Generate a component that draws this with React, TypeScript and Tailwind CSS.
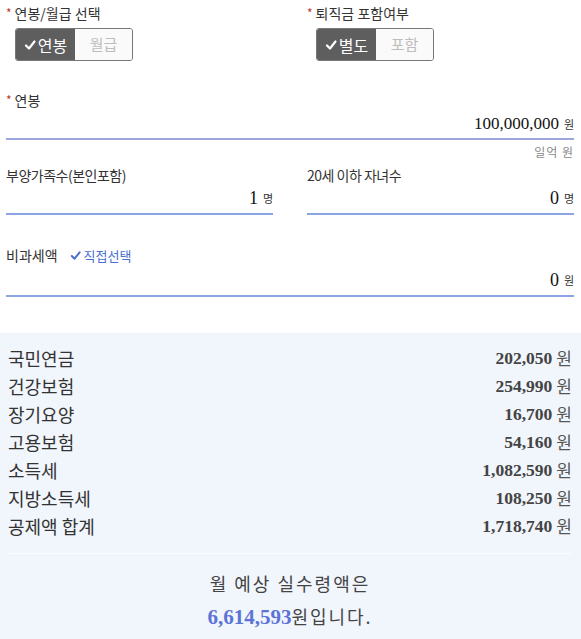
import React from "react";

const Check = ({ className = "" }: { className?: string }) => (
  <svg viewBox="0 0 12 12" className={className} fill="none" stroke="currentColor" strokeWidth={2.2} strokeLinecap="round" strokeLinejoin="round">
    <polyline points="2,6.5 5,9.5 10.5,2.5" />
  </svg>
);

const Star = () => <span className="text-[#c0392b] text-[12px] mr-[3px] relative top-[-1px]">*</span>;

function Toggle({ on, off }: { on: string; off: string }) {
  return (
    <div className="ml-[9px] mt-[6px] flex h-[33px] w-[118px] rounded-[3px] border border-[#777] overflow-hidden">
      <div className="flex w-[59px] items-center justify-center gap-[2px] bg-[#5e5e5e] text-white text-[16px]">
        <Check className="w-[12px] h-[12px]" />
        <span>{on}</span>
      </div>
      <div className="flex flex-1 items-center justify-center bg-[#fafafa] text-[#bdbdbd] text-[15px]">{off}</div>
    </div>
  );
}

const rows: [string, string][] = [
  ["국민연금", "202,050"],
  ["건강보험", "254,990"],
  ["장기요양", "16,700"],
  ["고용보험", "54,160"],
  ["소득세", "1,082,590"],
  ["지방소득세", "108,250"],
  ["공제액 합계", "1,718,740"],
];

export default function App() {
  return (
    <div className="w-[581px] min-h-[639px] bg-white text-[#333] font-['Noto_Sans_CJK_KR','Noto_Sans',sans-serif]">
      <div className="pl-[6px] pr-[7px]">
        <div className="grid grid-cols-2 gap-x-[34px] pt-[5px]">
          <div>
            <div className="text-[14px] leading-[17px] text-[#333]"><Star />연봉/월급 선택</div>
            <Toggle on="연봉" off="월급" />
          </div>
          <div>
            <div className="text-[14px] leading-[17px] text-[#333]"><Star />퇴직금 포함여부</div>
            <Toggle on="별도" off="포함" />
          </div>
        </div>

        <div className="mt-[31px] text-[14px] leading-[17px]"><Star />연봉</div>
        <div className="pt-[5px] pb-[4px] flex items-center justify-end border-b-2 border-[#9ca6da]">
          <span className="font-['Liberation_Serif',serif] text-[17px] leading-[20px] text-[#111]">100,000,000</span>
          <span className="ml-[5px] text-[11px] leading-[20px] w-[10px] text-[#333]">원</span>
        </div>
        <div className="mt-[5px] text-right text-[12px] leading-[14px] text-[#8a8a8a] tracking-[1px]">일억 원</div>

        <div className="grid grid-cols-2 gap-x-[34px] mt-[8px]">
          <div>
            <div className="text-[14px] leading-[17px] tracking-[-0.5px]">부양가족수(본인포함)</div>
            <div className="pt-[4px] pb-[5px] flex items-center justify-end border-b-2 border-[#8ba5e2]">
              <span className="font-['Liberation_Serif',serif] text-[18px] leading-[20px] text-[#111]">1</span>
              <span className="ml-[5px] text-[11px] leading-[20px] w-[10px]">명</span>
            </div>
          </div>
          <div>
            <div className="text-[14px] leading-[17px] tracking-[-0.5px]">20세 이하 자녀수</div>
            <div className="pt-[4px] pb-[5px] flex items-center justify-end border-b-2 border-[#8ba5e2]">
              <span className="font-['Liberation_Serif',serif] text-[18px] leading-[20px] text-[#111]">0</span>
              <span className="ml-[5px] text-[11px] leading-[20px] w-[10px]">명</span>
            </div>
          </div>
        </div>

        <div className="mt-[32px] flex items-center text-[14px] leading-[17px]">
          <span>비과세액</span>
          <span className="ml-[12px] flex items-center text-[#4a6fd0] text-[13px]">
            <Check className="w-[11px] h-[11px] mr-[3px]" />직접선택
          </span>
        </div>
        <div className="pt-[6px] pb-[5px] flex items-center justify-end border-b-2 border-[#8ba5e2]">
          <span className="font-['Liberation_Serif',serif] text-[18px] leading-[20px] text-[#111]">0</span>
          <span className="ml-[5px] text-[11px] leading-[20px] w-[10px]">원</span>
        </div>
      </div>

      <div className="mt-[36px] bg-[#f1f5fc] pl-[8px] pr-[9px] pt-[11px] pb-[10px]">
        {rows.map(([k, v]) => (
          <div key={k} className="flex h-[28px] items-center justify-between">
            <span className="text-[18px] text-[#333]">{k}</span>
            <span className="flex items-center">
              <span className="font-['Liberation_Serif',serif] font-bold text-[17.5px] text-[#444]">{v}</span>
              <span className="ml-[4px] text-[17px] text-[#555]">원</span>
            </span>
          </div>
        ))}
        <div className="mt-[13px] border-t border-[#fbfcff]" />
        <div className="mt-[17px] text-center text-[18px] leading-[24px] tracking-[2px] text-[#444]">월 예상 실수령액은</div>
        <div className="mt-[7px] text-center leading-[28px]">
          <span className="font-['Liberation_Serif',serif] font-bold text-[21px] text-[#5b74d6]">6,614,593</span>
          <span className="text-[18px] tracking-[2px] text-[#444]">원입니다.</span>
        </div>
      </div>
    </div>
  );
}
